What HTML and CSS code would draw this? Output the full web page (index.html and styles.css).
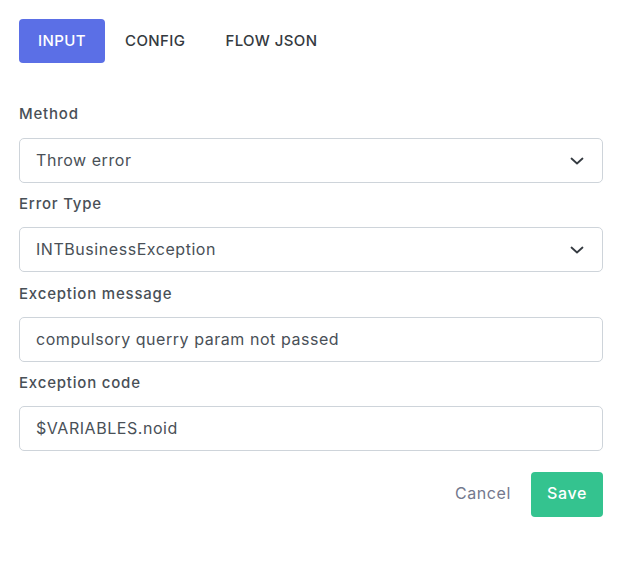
FILE: index.html
```html
<!DOCTYPE html>
<html>
<head>
<meta charset="utf-8">
<link rel="stylesheet" href="styles.css">
</head>
<body>
<div class="panel">
  <nav class="tabs">
    <button class="tab active">INPUT</button>
    <button class="tab">CONFIG</button>
    <button class="tab">FLOW JSON</button>
  </nav>
  <form class="form">
    <div class="field">
      <label class="label">Method</label>
      <div class="control select">
        <span>Throw error</span>
        <svg class="chev" width="14" height="8" viewBox="0 0 14 8"><path d="M1.5 1.5 L7 6.5 L12.5 1.5" fill="none" stroke="#343a40" stroke-width="1.8" stroke-linecap="round" stroke-linejoin="round"/></svg>
      </div>
    </div>
    <div class="field">
      <label class="label">Error Type</label>
      <div class="control select">
        <span>INTBusinessException</span>
        <svg class="chev" width="14" height="8" viewBox="0 0 14 8"><path d="M1.5 1.5 L7 6.5 L12.5 1.5" fill="none" stroke="#343a40" stroke-width="1.8" stroke-linecap="round" stroke-linejoin="round"/></svg>
      </div>
    </div>
    <div class="field">
      <label class="label">Exception message</label>
      <div class="control"><span>compulsory querry param not passed</span></div>
    </div>
    <div class="field">
      <label class="label">Exception code</label>
      <div class="control"><span>$VARIABLES.noid</span></div>
    </div>
    <div class="actions">
      <button type="button" class="btn-cancel">Cancel</button>
      <button type="button" class="btn-save">Save</button>
    </div>
  </form>
</div>
</body>
</html>
```
FILE: styles.css
```css
* { box-sizing: border-box; }
html, body { margin: 0; background: #fff; }
body {
  font-family: Inter, "Open Sans", sans-serif;
  color: #495057;
}
.panel { padding: 19px 19px 0 19px; width: 622px; }
.tabs { display: flex; }
.tab {
  font-family: inherit;
  letter-spacing: 0.4px;
  font-size: 15px;
  font-weight: 450;
  color: #343a40;
  background: transparent;
  border: 0;
  border-radius: 4px;
  height: 44px;
  padding: 0 20px 2px;
  cursor: pointer;
}
.tab.active { background: #5b6fe6; color: #fff; width: 86px; padding: 0 0 2px; }
.form { margin-top: 40px; display: flex; flex-direction: column; }
.field { display: flex; flex-direction: column; }
.field + .field { margin-top: 10.33px; }
.label {
  font-size: 15px;
  font-weight: 450;
  letter-spacing: 0.8px;
  line-height: 22px;
  color: #495057;
  margin-bottom: 13px;
}
.field + .field .label { margin-bottom: 12px; }
.control {
  height: 45px;
  border: 1px solid #ced4da;
  border-radius: 5px;
  padding: 0 16px 1px;
  display: flex;
  align-items: center;
  justify-content: space-between;
  font-size: 16px;
  letter-spacing: 0.55px;
  color: #495057;
}
.chev { margin-right: 2px; margin-top: 1px; }
.actions {
  display: flex;
  justify-content: flex-end;
  align-items: center;
  margin-top: 21px;
  gap: 20px;
}
.btn-cancel {
  font-family: inherit;
  letter-spacing: 0.6px;
  font-size: 16px;
  color: #74788d;
  background: transparent;
  border: 0;
  padding: 0 0 2px;
}
.btn-save {
  font-family: inherit;
  letter-spacing: 0.6px;
  font-size: 16px;
  font-weight: 450;
  color: #fff;
  background: #34c38f;
  border: 0;
  border-radius: 4px;
  width: 72px;
  height: 45px;
  padding: 0 0 2px;
}
```
